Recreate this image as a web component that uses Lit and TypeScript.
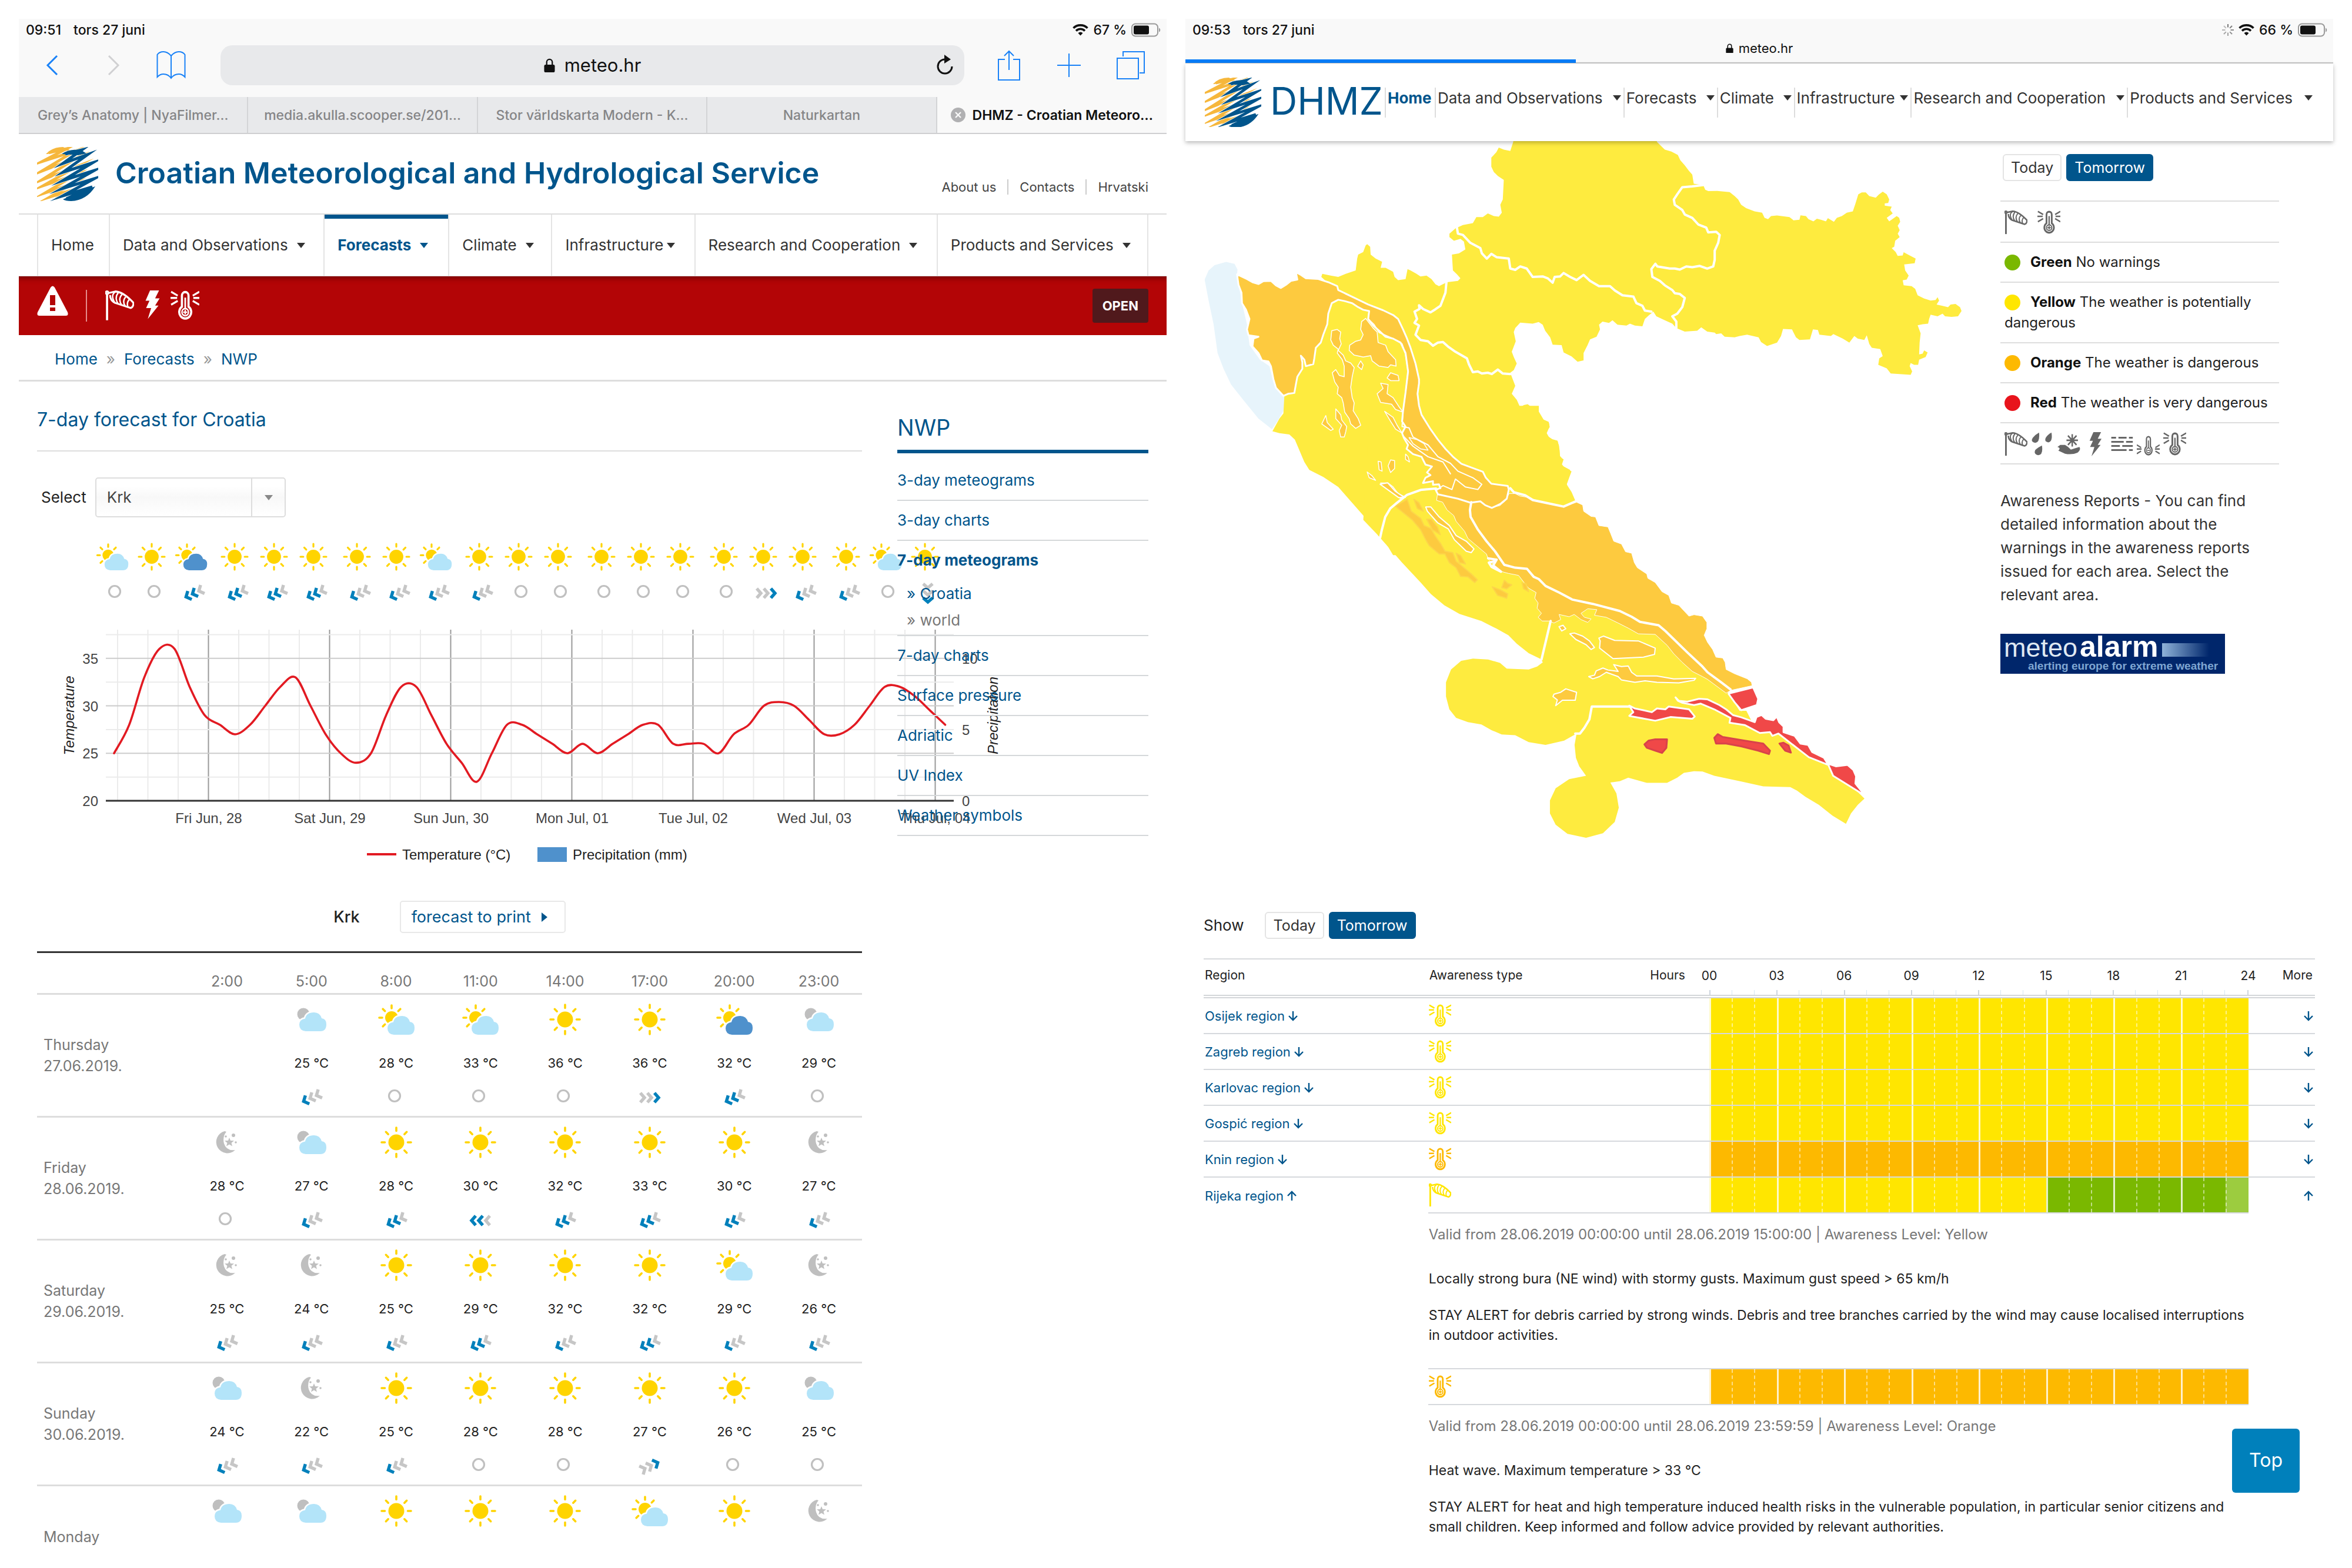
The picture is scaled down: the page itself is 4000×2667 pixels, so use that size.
import { LitElement, html, svg, css, nothing } from "lit";
import type { TemplateResult, SVGTemplateResult } from "lit";
import { classMap } from "lit/directives/class-map.js";

/* ---------- shared styles ---------- */

const base = css`
  :host {
    display: block;
    color: #222;
    font: 26px/34px Inter, "Liberation Sans", sans-serif;
  }
  * {
    box-sizing: border-box;
  }
  a {
    color: inherit;
    text-decoration: none;
  }
  button {
    font: inherit;
    color: inherit;
    border: 0;
    background: none;
    padding: 0;
    cursor: pointer;
  }
  svg {
    display: block;
  }
  ul {
    list-style: none;
    margin: 0;
    padding: 0;
  }
  h1,
  h2,
  p {
    margin: 0;
    font-weight: 400;
  }
  .status {
    display: flex;
    align-items: center;
    gap: 21px;
    height: 38px;
    padding: 0 10px 0 12px;
    font-size: 23px;
    font-weight: 500;
    line-height: 28px;
    color: #111;
  }
  .status .right {
    margin-left: auto;
    display: flex;
    align-items: center;
    gap: 8px;
  }
  .caret {
    display: inline-block;
    border: 7px solid transparent;
    border-top: 9px solid currentColor;
    border-bottom: 0;
  }
`;

/* ---------- status bar and logo ---------- */

const wifi = html`<svg width="27" height="20" viewBox="0 0 27 20" fill="none" stroke="#111" stroke-width="3.6">
  <path d="M1.5 6.8a17 17 0 0 1 24 0M6 11.4a10.6 10.6 0 0 1 15 0" />
  <path d="M13.5 19.5l-4-4.3a5.8 5.8 0 0 1 8 0z" fill="#111" stroke="none" />
</svg>`;

const battery = html`<svg width="50" height="24" viewBox="0 0 50 24">
  <rect x="1" y="1.500" width="44" height="21" rx="6" fill="none" stroke="#999" stroke-width="2" />
  <rect x="4" y="4.500" width="26" height="15" rx="3" fill="#111" />
  <path d="M47 8.500c3 1 3 6 0 7z" fill="#999" />
</svg>`;

const spinner = html`<svg width="20" height="22" viewBox="-10 -11 20 22" stroke="#777" stroke-width="2">
  ${[0, 45, 90, 135, 180, 225, 270, 315].map(
    (a, i) => svg`<path d="M0 -4.500L0 -10" transform=${`rotate(${a})`} opacity=${1 - i * 0.08} />`
  )}
</svg>`;

const lock = (size: number) => html`<svg width=${size} height=${size * 1.3} viewBox="0 0 20 26">
  <path d="M5 13V7a5 5 0 0 1 10 0v6" fill="none" stroke="#111" stroke-width="2.400" />
  <rect x="0.500" y="11.500" width="19" height="14" rx="2.500" fill="#111" />
</svg>`;

const logo = (width: number) => html`<svg
  width=${width}
  viewBox="0 0 104 92"
  fill="none"
  stroke-miterlimit="14"
  role="img"
  aria-label="DHMZ"
>
  <path
    d="M20 10L50 3 8 25 64 7 8 41 68 18 8 56 68 33 10 66 66 47 14 78 62 62 22 85 54 75 32 88"
    stroke="#f6b73c" stroke-width="4.800"
  />
  <path d="M15 12Q26 0 44 0L56 5 42 8 46 4 18 12z" fill="#f6b73c" />
  <path
    d="M48 12L76 5 44 28 86 13 44 43 94 27 44 57 97 40 42 71 97 54 44 83 94 68 50 88"
    stroke="#fff" stroke-width="6.600"
  />
  <path
    d="M48 12L76 5 44 28 86 13 44 43 94 27 44 57 97 40 42 71 97 54 44 83 94 68 50 88"
    stroke="#00558c" stroke-width="5"
  />
  <path d="M42 12Q56 2 76 6L84 11 70 14z" fill="#00558c" />
  <path d="M44 89L70 78 99 67Q84 91 58 92Q48 92 44 89z" fill="#00558c" />
</svg>`;

/* ---------- awareness icons, 48 by 48 ---------- */

const thermometer = (sign: SVGTemplateResult) => svg`
  <path d="M19 9a5.500 5.500 0 0 1 11 0v17a10 10 0 1 1-11 0z" fill="none" stroke="currentColor" stroke-width="3.600" />
  <circle cx="24.500" cy="34.500" r="5.500" fill="none" stroke="currentColor" stroke-width="2.400" />
  <path d="M24.500 12V29" stroke="currentColor" stroke-width="2.800" />
  ${sign}`;

const AWARENESS: Record<string, SVGTemplateResult> = {
  wind: svg`<g fill="none" stroke="currentColor" stroke-width="3" stroke-linejoin="round">
    <circle cx="3" cy="4.500" r="2" /><path d="M3 6V47" stroke-width="3.600" />
    <path d="M5 5L17 2.500C28 3 38 11 47 20Q47 27 42 28L16 20Q8 16 8 8" />
    <path d="M17 3Q8 8 16 20M22 4Q15 12 21 21M28 7Q21 14 27 23M34 11Q28 17 33 25M40 15Q35 20 38 27" stroke-width="2.400" /></g>`,
  heat: svg`${thermometer(svg`<path d="M21 34.500h7M24.500 31v7" stroke="currentColor" stroke-width="2.200" />`)}
    <path d="M1 3L12 9M0 12.500H11M1 23L12 17M48 3L37 9M48 12.500H38M48 23L37 17" stroke="currentColor" stroke-width="3" />`,
  cold: svg`<g transform="translate(6 7) scale(.75 .86)">${thermometer(svg`<path d="M21 34.500h7" stroke="currentColor" stroke-width="2.200" />`)}</g>
    <path d="M0 26L9 31M0 34H10M0 43L9 38M48 26L39 31M48 34H38M48 43L39 38" stroke="currentColor" stroke-width="2.600" />`,
  storm: svg`<path d="M20 1H36L29 14H37L29 26H35L16 48L22 30H13L19 18H12z" fill="currentColor" />`,
  rain: svg`<g fill="currentColor"><path d="M17 2Q19 22 9 22Q-2 20 4 12Q9 6 17 2z" /><path d="M43 2Q46 20 36 21Q27 19 31 12Q35 6 43 2z" /><path d="M23 27Q26 46 15 46Q5 44 9 36Q14 31 23 27z" /></g>`,
  snow: svg`<path d="M0 30L6 26H16Q22 29 28 35L46 30Q50 35 42 41Q30 46 16 43L2 37Q8 32 0 30z" fill="currentColor" />
    <path d="M31 5V29M19 17H43M22 8L40 26M40 8L22 26" stroke="currentColor" stroke-width="3" />
    <circle cx="31" cy="17" r="4" fill="currentColor" />`,
  fog: svg`<path d="M2 12H12M17 12H34M39 12H47M2 20H28M33 20H47M2 28H20M25 28H47M2 36H34M39 36H47" stroke="currentColor" stroke-width="3.600" />`,
};

const awareness = (kind: string, size = 40) =>
  html`<svg width=${size} height=${size * 1.1} viewBox="0 0 48 49" preserveAspectRatio="none" aria-label=${kind} role="img">
    ${AWARENESS[kind]}
  </svg>`;

/* ---------- weather and wind symbols, centred on 0,0 ---------- */

const rays = (x: number, y: number, from: number, to: number) =>
  [0, 45, 90, 135, 180, 225, 270, 315].map(
    (a) =>
      svg`<path d=${`M0 ${-from}V${-to}`} transform=${`translate(${x} ${y}) rotate(${a})`} stroke="#ffd400" stroke-width="3.600" stroke-linecap="round" />`
  );

const CLOUD = "M-14 31Q-25 30 -25 20Q-25 11 -15 9.500Q-13 -1 0 -1Q10 -1 13 9Q21 10 21 19Q21 31 11 31z";

const cloud = (x: number, y: number, fill: string) =>
  svg`<path d=${CLOUD} transform=${`translate(${x} ${y})`} fill=${fill} stroke="#fff" stroke-width="5" paint-order="stroke" />`;

const weather = (kind: string): SVGTemplateResult => {
  switch (kind) {
    case "s":
      return svg`${rays(0, 0, 19.5, 25)}<circle r="13.500" fill="#ffd400" />`;
    case "pc":
    case "pd":
      return svg`${rays(-8, -3, 16, 21)}<circle cx="-8" cy="-3" r="11" fill="#ffd400" />
        ${cloud(10, -5, kind === "pc" ? "#b3e4f9" : "#4f91cc")}`;
    case "nc":
      return svg`<circle cx="-14" cy="-9" r="10.500" fill="#bfbfbf" />${cloud(4, -11, "#b3e4f9")}`;
    case "m":
      return svg`<path d="M-4 -19A19 19 0 1 0 14 13Q-1 15 -5 2Q-8 -10 -1 -18z" fill="#bfbfbf" />
        <path d="M4 -8l2 5 6 .3-4.500 3.700 1.500 5.500-5-3-5 3 1.500-5.500-4.500-3.700 6-.3z" fill="#bfbfbf" />
        <g fill="#bfbfbf"><circle cx="-2" cy="-10" r="1.800" /><circle cx="11" cy="-12" r="3" /><circle cx="15" cy="0" r="1.800" /></g>`;
    default:
      return svg``;
  }
};

/* wind code: "c" is calm, otherwise a direction letter and the strength from 1 to 3 */
const TURN: Record<string, number> = { l: 0, w: -25, d: -90, u: 155, r: 180 };

const wind = (code: string): SVGTemplateResult => {
  if (!code) return svg``;
  if (code === "c") return svg`<circle cx="-3" cy="-3" r="9.500" fill="none" stroke="#c0c0c0" stroke-width="3.200" />`;
  const strength = Number(code[1]);
  return svg`<g transform=${`rotate(${TURN[code[0]]})`} fill="none" stroke-width="5.400">
    ${[-19, -7, 5].map(
      (t, i) => svg`<path d=${`M${t + 11} -8L${t + 4} 0L${t + 11} 8`} stroke=${i < strength ? "#0080bb" : "#c6c6c6"} />`
    )}
  </g>`;
};

/* ---------- meteogram ---------- */

const TEMPS = [
  25, 28, 33, 36, 36, 32, 29, 28, 27, 28, 30, 32, 33, 30, 27, 25, 24, 25, 29, 32, 32, 29, 26, 24, 22, 25, 28, 28, 27,
  26, 25, 26, 25, 26, 27, 28, 28, 26, 26, 26, 25, 27, 28, 30, 30.4, 30, 28.5, 27, 27, 28, 30, 32, 32, 31, 29.5, 28,
];
const tx = (i: number) => 194 + i * 25.7;
const ty = (t: number) => 1364 - (t - 20) * 16.15;

const curve = () => {
  const p = TEMPS.map((t, i) => [tx(i), ty(t)]);
  let d = `M${p[0]}`;
  for (let i = 0; i < p.length - 1; i++) {
    const a = p[Math.max(i - 1, 0)];
    const b = p[i];
    const c = p[i + 1];
    const e = p[Math.min(i + 2, p.length - 1)];
    d += `C${b[0] + (c[0] - a[0]) / 6} ${b[1] + (c[1] - a[1]) / 6} ${c[0] - (e[0] - b[0]) / 6} ${c[1] - (e[1] - b[1]) / 6} ${c[0]} ${c[1]}`;
  }
  return d;
};

const SKY = "pc s pd s s s s s pc s s s s s s s s s s pc s".split(" ");
const WINDS = "c c w2 w2 w2 w2 w1 w1 w1 w1 c c c c c c r1 w1 w1 c d1".split(" ");
const skyX = (i: number) => 191 + Math.floor(i / 3) * 208 + (i % 3) * 67;
const DAYS = ["Fri Jun, 28", "Sat Jun, 29", "Sun Jun, 30", "Mon Jul, 01", "Tue Jul, 02", "Wed Jul, 03", "Thu Jul, 04"];

/* ---------- forecast table ---------- */

const HOURS = ["2:00", "5:00", "8:00", "11:00", "14:00", "17:00", "20:00", "23:00"];
interface Day {
  name: string;
  date?: string;
  sky: string[];
  temps?: number[];
  winds?: string[];
}
const FORECAST: Day[] = [
  { name: "Thursday", date: "27.06.2019.", sky: ["", "nc", "pc", "pc", "s", "s", "pd", "nc"], temps: [NaN, 25, 28, 33, 36, 36, 32, 29], winds: ["", "w1", "c", "c", "c", "r1", "w2", "c"] },
  { name: "Friday", date: "28.06.2019.", sky: ["m", "nc", "s", "s", "s", "s", "s", "m"], temps: [28, 27, 28, 30, 32, 33, 30, 27], winds: ["c", "w1", "w2", "l2", "w2", "w2", "w2", "w1"] },
  { name: "Saturday", date: "29.06.2019.", sky: ["m", "m", "s", "s", "s", "s", "pc", "m"], temps: [25, 24, 25, 29, 32, 32, 29, 26], winds: ["w1", "w1", "w1", "w2", "w1", "w2", "w1", "w1"] },
  { name: "Sunday", date: "30.06.2019.", sky: ["nc", "m", "s", "s", "s", "s", "s", "nc"], temps: [24, 22, 25, 28, 28, 27, 26, 25], winds: ["w1", "w1", "w1", "c", "c", "u1", "c", "c"] },
  { name: "Monday", sky: ["nc", "nc", "s", "s", "s", "pc", "s", "m"] },
];

class ForecastPanel extends LitElement {
  static styles = [
    base,
    css`
      .chrome {
        background: #f9f9f9;
      }
      .toolbar {
        display: grid;
        grid-template-columns: 343px 1fr 344px;
        align-items: center;
        padding: 7px 0 20px;
        color: #1a82f7;
      }
      .group {
        display: grid;
        align-items: center;
      }
      .group.left {
        grid-template-columns: 104px 85px 1fr;
        padding-left: 45px;
      }
      .group.end {
        grid-template-columns: 101px 101px 1fr;
        padding-left: 57px;
      }
      .group button {
        justify-self: start;
      }
      .address {
        display: grid;
        grid-template-columns: 1fr auto 1fr;
        align-items: center;
        height: 68px;
        border-radius: 20px;
        background: #e8e9eb;
        color: #111;
        font-size: 31px;
      }
      .address .host {
        grid-column: 2;
        display: flex;
        align-items: center;
        gap: 16px;
      }
      .address button {
        justify-self: end;
        padding-right: 18px;
      }
      .tabs {
        display: grid;
        grid-template-columns: repeat(5, minmax(0, 1fr));
        height: 63px;
        border-bottom: 2px solid #cfcfd1;
        background: #e8e9eb;
        color: #858587;
        font-size: 23px;
        font-weight: 500;
      }
      .tabs a {
        display: flex;
        align-items: center;
        justify-content: center;
        gap: 12px;
        border-right: 2px solid #d3d4d6;
        white-space: nowrap;
      }
      .tabs a:last-child {
        border-right: 0;
      }
      .tabs .on {
        background: #f9f9f9;
        color: #111;
        font-weight: 600;
      }
      .brand {
        display: flex;
        align-items: center;
        gap: 29px;
        height: 135px;
        padding: 0 31px;
      }
      .brand h1 {
        font-size: 50px;
        line-height: 56px;
        padding-bottom: 4px;
        font-weight: 600;
        color: #00558c;
      }
      .brand ul {
        display: flex;
        margin: 44px 0 0 auto;
        font-size: 22px;
        color: #444;
      }
      .brand li + li {
        margin-left: 19px;
        padding-left: 19px;
        border-left: 2px solid #ccc;
      }
      .brand li {
        line-height: 26px;
      }
      .menu {
        display: grid;
        grid-template-columns: 122fr 365fr 212fr 175fr 243fr 412fr 360fr;
        padding: 0 31px;
        border-top: 2px solid #ddd;
        border-bottom: 1px solid #ddd;
        color: #333;
      }
      .menu a {
        display: flex;
        align-items: center;
        gap: 15px;
        height: 104px;
        padding-left: 22px;
        border-left: 2px solid #e4e4e4;
        white-space: nowrap;
      }
      .menu a:last-child {
        border-right: 2px solid #e4e4e4;
      }
      .menu a.tight {
        gap: 6px;
      }
      .menu a.on {
        color: #00558c;
        font-weight: 700;
        box-shadow: inset 0 7px #00558c;
      }
      .alert {
        display: flex;
        align-items: center;
        height: 100px;
        padding: 0 31px;
        background: #b30506;
        box-shadow: inset 0 10px 8px -6px #7d0304;
        color: #fff;
      }
      .alert .triangle {
        margin: 0 30px 18px 0;
      }
      .alert .hazards {
        display: flex;
        gap: 8px;
        padding-left: 31px;
        border-left: 2px solid #e58c8c;
      }
      .alert button {
        margin-left: auto;
        height: 58px;
        padding: 0 17px;
        border-radius: 4px;
        background: #50191c;
        font-size: 22px;
        font-weight: 700;
      }
      .crumbs {
        display: flex;
        gap: 15px;
        height: 79px;
        align-items: center;
        padding: 5px 61px 0;
        border-bottom: 3px solid #ddd;
        color: #00558c;
      }
      .crumbs span {
        color: #999;
      }
      .body {
        display: grid;
        grid-template-columns: minmax(0, 1403fr) minmax(0, 427fr);
        gap: 60px;
        align-items: start;
        padding: 0 31px;
      }
      h2.title {
        padding: 45px 0 32px;
        border-bottom: 2px solid #ddd;
        font-size: 32px;
        line-height: 40px;
        color: #00558c;
      }
      .pick {
        display: flex;
        align-items: center;
        gap: 15px;
        margin: 44px 0 30px 7px;
      }
      .select {
        display: grid;
      }
      .select > * {
        grid-area: 1 / 1;
      }
      .select .drop {
        justify-self: end;
        width: 59px;
        border-left: 2px solid #ddd;
        display: grid;
        place-items: center;
        color: #888;
        pointer-events: none;
      }
      select {
        appearance: none;
        width: 324px;
        height: 68px;
        padding: 0 18px;
        border: 2px solid #ddd;
        border-radius: 5px;
        background: linear-gradient(#fff 20%, #f8f8f8 50%, #fff);
        font: inherit;
        color: #444;
      }
      .meteogram {
        width: 100%;
        overflow: visible;
        font: 24px "Liberation Sans", Arial, sans-serif;
        fill: #444;
      }
      .place {
        display: flex;
        justify-content: center;
        align-items: center;
        gap: 68px;
        margin: 54px 0 31px;
        font-size: 27px;
        font-weight: 500;
      }
      .print {
        display: flex;
        align-items: center;
        gap: 18px;
        height: 55px;
        padding: 0 29px 0 18px;
        border: 2px solid #e8e8e8;
        border-radius: 5px;
        color: #00558c;
        font-weight: 400;
      }
      .print i {
        border: 8px solid transparent;
        border-left: 10px solid currentColor;
        border-right: 0;
      }
      table {
        width: 100%;
        table-layout: fixed;
        border-collapse: collapse;
        border-top: 3px solid #333;
      }
      col.day {
        width: 18%;
      }
      th {
        font-weight: 400;
        font-size: 25px;
        line-height: 36px;
        color: #777;
        padding: 0;
      }
      tbody th {
        padding-left: 11px;
        text-align: left;
      }
      tr {
        border-bottom: 3px solid #ddd;
      }
      thead th {
        padding: 30px 0 2px;
      }
      thead th + th {
        padding-right: 3px;
      }
      tbody tr:last-child {
        border-bottom: 0;
      }
      tbody tr:last-child th {
        height: 107px;
        vertical-align: bottom;
        padding-bottom: 2px;
      }
      td {
        padding: 14px 3px 13px 0;
        text-align: center;
        font-size: 22px;
        line-height: 28px;
        vertical-align: top;
      }
      td svg {
        margin: 0 auto;
      }
      td p {
        min-height: 28px;
        margin: 32px 0 27px;
      }
      .side {
        position: relative;
        z-index: 1;
        color: #00558c;
      }
      .side h2 {
        margin: 55px 0 13px;
        padding-bottom: 15px;
        border-bottom: 6px solid #00558c;
        font-size: 38px;
        line-height: 46px;
      }
      .side li.item {
        border-bottom: 2px solid #d5d8da;
      }
      .side li.item > a {
        display: block;
        line-height: 66px;
      }
      .side .on > a {
        font-weight: 700;
      }
      .side .sub {
        padding: 1px 0 3px 16px;
        line-height: 45px;
      }
      .side .dim {
        color: #777;
      }
    `,
  ];

  private chart(): TemplateResult {
    return html`<svg class="meteogram" viewBox="63 912 1403 568" role="img" aria-label="7-day meteogram for Krk">
      ${SKY.map((k, i) => svg`<g transform=${`translate(${skyX(i)} 949) scale(.88)`}>${weather(k)}</g>`)}
      ${WINDS.map((k, i) => svg`<g transform=${`translate(${skyX(i) + (k === "c" ? 7 : 5)} 1011)`}>${wind(k)}</g>`)}
      ${Array.from({ length: 28 }, (_, i) => {
        const x = 200 + i * 51.5;
        return i % 4 === 3
          ? svg`<path d=${`M${x} 1073V1364`} stroke="#999" stroke-width="2" />`
          : svg`<path d=${`M${x} 1073V1364`} stroke="#ebebeb" stroke-width="2" />`;
      })}
      ${[22.5, 27.5, 32.5, 37.5].map((t) => svg`<path d=${`M180 ${ty(t)}H1622`} stroke="#ebebeb" stroke-width="2" />`)}
      ${[25, 30, 35].map((t) => svg`<path d=${`M180 ${ty(t)}H1622`} stroke="#ccc" stroke-width="2" />`)}
      <path d="M180 1364H1622" stroke="#333" stroke-width="3" />
      <path d=${curve()} fill="none" stroke="#e21a22" stroke-width="3.600" stroke-linecap="round" />
      ${[20, 25, 30, 35].map((t) => svg`<text x="167" y=${ty(t) + 9} text-anchor="end">${t}</text>`)}
      ${[0, 5, 10].map((t) => svg`<text x="1636" y=${1373 - t * 24.2}>${t}</text>`)}
      ${DAYS.map((d, i) => svg`<text x=${355 + i * 206} y="1402" text-anchor="middle">${d}</text>`)}
      <g font-style="italic" text-anchor="middle" fill="#222">
        <text transform="translate(126 1219) rotate(-90)">Temperature</text>
        <text transform="translate(1697 1219) rotate(-90)">Precipitation</text>
      </g>
      <path d="M624 1455H674" stroke="#e21a22" stroke-width="4" />
      <rect x="914" y="1443" width="50" height="25" fill="#4f91cc" />
      <g fill="#222">
        <text x="684" y="1464">Temperature (°C)</text>
        <text x="974" y="1464">Precipitation (mm)</text>
      </g>
    </svg>`;
  }

  private day(d: Day): TemplateResult {
    return html`<tr>
      <th scope="row">${d.name}${d.date ? html`<br />${d.date}` : nothing}</th>
      ${HOURS.map(
        (_, i) => html`<td>
          <svg width="68" height="56" viewBox="-34 -28 68 56">${weather(d.sky[i])}</svg>
          ${d.temps && d.winds
            ? html`<p>${d.temps[i] ? `${d.temps[i]} °C` : nothing}</p>
                <svg width="48" height="36" viewBox="-24 -18 48 36">${wind(d.winds[i])}</svg>`
            : nothing}
        </td>`
      )}
    </tr>`;
  }

  render() {
    const menu: [string, string][] = [
      ["Home", ""],
      ["Data and Observations", ""],
      ["Forecasts", "on"],
      ["Climate", ""],
      ["Infrastructure", "tight"],
      ["Research and Cooperation", ""],
      ["Products and Services", ""],
    ];
    return html`
      <div class="chrome">
        <div class="status">
          <span>09:51</span><span>tors 27 juni</span>
          <span class="right">${wifi}<span>67 %</span>${battery}</span>
        </div>
        <div class="toolbar">
          <div class="group left">
            <button aria-label="Back">
              <svg width="24" height="36" viewBox="0 0 24 36" fill="none" stroke="currentColor" stroke-width="3"><path d="M20 2L4 18L20 34" /></svg>
            </button>
            <button aria-label="Forward">
              <svg width="24" height="36" viewBox="0 0 24 36" fill="none" stroke="#d0d0d2" stroke-width="3"><path d="M4 2L20 18L4 34" /></svg>
            </button>
            <button aria-label="Bookmarks">
              <svg width="50" height="48" viewBox="0 0 50 48" fill="none" stroke="currentColor" stroke-width="2">
                <path d="M25 46V8Q19 1 12 1Q5 1 1.500 6V44Q6 39 12 39Q20 39 25 46Q30 39 38 39Q44 39 48.500 44V6Q45 1 38 1Q31 1 25 8" />
              </svg>
            </button>
          </div>
          <div class="address">
            <span class="host">${lock(19)}<span>meteo.hr</span></span>
            <button aria-label="Reload">
              <svg width="30" height="36" viewBox="0 0 30 36"><path d="M17 8H14A12 12 0 1 0 27 20" fill="none" stroke="#111" stroke-width="3" /><path d="M14 0L25 8L14 15z" fill="#111" /></svg>
            </button>
          </div>
          <div class="group end">
            <button aria-label="Share">
              <svg width="38" height="52" viewBox="0 0 38 52" fill="none" stroke="currentColor" stroke-width="2"><path d="M12 16H1V51H37V16H26M19 34V2M11 10L19 2L27 10" /></svg>
            </button>
            <button aria-label="New tab">
              <svg width="40" height="40" viewBox="0 0 40 40" stroke="currentColor" stroke-width="2"><path d="M20 0V40M0 20H40" /></svg>
            </button>
            <button aria-label="Show tabs">
              <svg width="48" height="48" viewBox="0 0 48 48" fill="none" stroke="currentColor" stroke-width="2"><path d="M1 12H37V47H1zM11 9V1H47V37H39" /></svg>
            </button>
          </div>
        </div>
        <nav class="tabs">
          <a href="#">Grey’s Anatomy | NyaFilmer…</a>
          <a href="#">media.akulla.scooper.se/201…</a>
          <a href="#">Stor världskarta Modern - K…</a>
          <a href="#">Naturkartan</a>
          <a href="#" class="on">
            <svg width="25" height="25" viewBox="0 0 25 25"><circle cx="12.500" cy="12.500" r="12.500" fill="#b0b0b2" /><path d="M8 8L17 17M17 8L8 17" stroke="#f9f9f9" stroke-width="2.400" /></svg>
            DHMZ - Croatian Meteoro…
          </a>
        </nav>
      </div>

      <header class="brand">
        ${logo(104)}
        <h1>Croatian Meteorological and Hydrological Service</h1>
        <ul>
          <li><a href="#">About us</a></li>
          <li><a href="#">Contacts</a></li>
          <li><a href="#">Hrvatski</a></li>
        </ul>
      </header>

      <nav class="menu">
        ${menu.map(
          ([t, c]) => html`<a href="#" class=${classMap({ on: c === "on", tight: c === "tight" })}
            >${t}${t === "Home" ? nothing : html`<i class="caret"></i>`}</a
          >`
        )}
      </nav>

      <div class="alert">
        <svg class="triangle" width="53" height="51" viewBox="0 0 53 51">
          <path d="M23 3Q26.500-2 30 3L52 45Q54 51 49 51H4Q-1 51 1 45z" fill="#fff" />
          <path d="M22 16H31V33H22zM22 37H31V43H22z" fill="#b30506" />
        </svg>
        <div class="hazards">${awareness("wind", 49)} ${awareness("storm", 46)} ${awareness("heat", 49)}</div>
        <button>OPEN</button>
      </div>

      <nav class="crumbs">
        <a href="#">Home</a><span>»</span><a href="#">Forecasts</a><span>»</span><a href="#">NWP</a>
      </nav>

      <div class="body">
        <main>
          <h2 class="title">7-day forecast for Croatia</h2>
          <div class="pick">
            <label for="place">Select</label>
            <div class="select">
              <select id="place">
                <option>Krk</option>
              </select>
              <span class="drop"><i class="caret"></i></span>
            </div>
          </div>
          ${this.chart()}
          <div class="place">
            <span>Krk</span>
            <a class="print" href="#">forecast to print<i></i></a>
          </div>
          <table>
            <colgroup>
              <col class="day" />
              <col span="8" />
            </colgroup>
            <thead>
              <tr>
                <th></th>
                ${HOURS.map((h) => html`<th scope="col">${h}</th>`)}
              </tr>
            </thead>
            <tbody>
              ${FORECAST.map((d) => this.day(d))}
            </tbody>
          </table>
        </main>
        <aside class="side">
          <h2>NWP</h2>
          <ul>
            <li class="item"><a href="#">3-day meteograms</a></li>
            <li class="item"><a href="#">3-day charts</a></li>
            <li class="item on">
              <a href="#">7-day meteograms</a>
              <ul class="sub">
                <li><a href="#">» Croatia</a></li>
                <li><a class="dim" href="#">» world</a></li>
              </ul>
            </li>
            ${["7-day charts", "Surface pressure", "Adriatic", "UV Index", "Weather symbols"].map(
              (t) => html`<li class="item"><a href="#">${t}</a></li>`
            )}
          </ul>
        </aside>
      </div>
    `;
  }
}
customElements.define("forecast-panel", ForecastPanel);

/* ---------- warnings map ---------- */

/* The mainland is digitised on a northern and a southern sheet, each with its own grid. */
const NORTH = "translate(2030 230) scale(.848 .4464)";
const SOUTH = "translate(2330 700) scale(.574 .4847)";

const poly = (points: string) => `M${points}Z`;

const N_YELLOW =
  "641,10 929,10 929,25 945,55 958,62 971,75 976,95 985,115 993,135 1000,150 1003,185 1022,190 1026,208 1032,213 1050,212 1075,217 1085,232 1092,245 1098,265 1108,278 1125,290 1140,295 1145,315 1152,320 1158,308 1170,306 1195,312 1203,324 1215,322 1217,305 1228,308 1233,320 1243,328 1250,318 1258,322 1268,328 1272,316 1284,330 1290,315 1300,308 1310,295 1322,290 1327,262 1333,225 1340,218 1348,218 1355,232 1368,238 1374,226 1382,215 1390,225 1395,245 1393,258 1386,260 1386,268 1400,272 1397,285 1402,298 1390,315 1395,328 1410,308 1415,315 1417,330 1412,345 1416,362 1412,375 1416,388 1407,402 1405,425 1400,430 1408,445 1412,460 1422,458 1424,446 1436,458 1448,470 1446,488 1425,492 1427,515 1434,535 1430,550 1422,553 1424,572 1440,575 1447,585 1452,610 1465,622 1478,630 1488,628 1492,617 1495,630 1490,645 1502,650 1513,655 1518,645 1528,643 1537,655 1540,670 1533,690 1520,692 1507,690 1502,680 1492,690 1478,684 1475,700 1473,718 1462,720 1452,724 1458,755 1456,790 1455,835 1462,832 1465,820 1472,828 1468,845 1455,855 1453,875 1445,875 1438,868 1436,880 1441,900 1438,913 1398,908 1390,888 1373,875 1375,850 1382,842 1377,815 1360,810 1355,795 1350,762 1345,780 1332,775 1325,765 1315,790 1302,775 1283,758 1278,765 1255,760 1252,742 1242,740 1236,778 1215,780 1208,770 1200,740 1182,738 1178,765 1170,790 1150,803 1138,788 1133,770 1110,760 1095,765 1085,770 1065,768 1058,755 1048,758 1045,752 1030,748 1018,732 1010,745 985,748 968,735 960,718 945,705 928,690 922,672 912,688 905,700 900,728 885,725 875,718 868,725 850,722 840,705 833,715 820,710 813,722 815,740 808,768 795,778 790,800 782,830 782,858 770,863 758,843 742,828 738,800 720,798 715,770 705,745 700,722 692,712 680,718 655,714 645,735 642,750 646,785 638,825 642,845 648,870 642,895 635,905 640,930 645,955 638,985 648,1008 655,1038 662,1028 670,1025 680,1040 690,1055 700,1082 712,1092 714,1110 708,1135 715,1158 730,1165 734,1200 735,1228 742,1235 738,1258 755,1275 752,1300 748,1330 758,1360 766,1395 742,1413 632,1600 400,1600 390,1568 370,1525 350,1470 290,1340 260,1302 232,1275 222,1245 212,1200 203,1160 192,1140 172,1135 158,1128 172,1080 180,1060 182,990 250,640 290,600 256,540 258,528 275,535 290,540 305,528 325,515 328,470 330,455 340,445 345,420 348,415 354,425 355,455 365,470 378,482 375,505 385,505 400,520 403,540 410,552 425,548 429,510 435,515 447,528 455,538 467,535 477,548 485,568 492,575 508,560 530,555 535,545 528,530 520,515 518,455 532,450 545,435 542,405 535,395 522,402 513,388 513,375 525,355 540,342 560,335 567,312 580,312 590,298 602,308 612,310 618,295 615,265 620,245 622,170 610,155 602,140 597,120 597,85 607,65 612,47 622,55 635,60 641,25";
const N_ORANGE =
  "87,530 107,548 118,560 130,567 140,556 155,555 165,572 175,582 185,570 195,555 208,550 205,522 215,532 225,545 250,548 270,560 288,575 290,590 325,622 350,645 380,667 400,685 410,700 420,740 428,775 435,810 445,870 452,930 452,945 449,985 452,1030 457,1065 475,1120 490,1160 505,1195 520,1225 537,1252 560,1268 580,1282 586,1305 597,1328 630,1336 632,1350 628,1385 615,1405 598,1420 585,1410 575,1395 555,1400 530,1385 490,1368 485,1350 495,1345 492,1330 480,1332 480,1318 460,1325 465,1305 475,1295 468,1285 478,1262 465,1255 457,1225 440,1215 427,1195 430,1180 422,1155 418,1135 425,1110 418,1090 420,1050 425,980 430,900 425,830 415,790 400,775 385,768 372,745 360,725 350,700 352,670 340,665 330,655 318,640 303,632 290,627 277,640 270,680 268,720 260,760 255,790 245,810 242,850 240,872 225,880 222,855 215,840 218,865 218,890 208,920 205,950 202,982 190,985 180,993 165,962 160,930 155,880 150,862 137,858 130,830 118,805 120,775 130,768 110,762 107,740 112,700 105,665 97,640 96,600 90,570";
const N_SEA =
  "87,530 97,640 107,720 112,800 133,855 152,880 160,940 180,990 184,1000 180,1050 168,1090 157,1120 130,1080 100,1010 75,950 60,890 48,830 40,720 30,630 22,550 30,515 42,495 65,483 82,490 88,512";
const N_LINES = [
  "1022,190 1000,195 980,198 970,225 963,245 965,265 980,285 985,302 1000,315 1012,340 1028,352 1032,370 1048,368 1055,380 1052,410 1045,440 1045,475 1042,500 1030,508 1015,498 1000,503 988,500 975,512 965,508 955,508 930,500 926,490 918,510 920,540 935,555 945,572 960,590 965,602 975,605 985,620 980,655 970,680 960,690 968,710 968,735",
  "528,352 530,375 540,380 555,410 575,430 578,450 588,470 597,452 608,465 632,470 635,508 645,513 655,500 668,508 680,540 700,538 710,545 720,562 724,540 735,538 742,525 755,540 768,552 782,532 795,555 813,575 835,575 845,592 860,610 882,615 888,640 900,650 905,668 918,672",
  "507,560 505,600 495,650 485,663 475,675 460,662 452,648 453,662 443,672 448,700 443,715 452,725 445,760 455,780 470,785 480,802 490,790 500,788 510,805 525,825 548,850 552,872 560,903 570,900 578,908 590,905 598,910 610,893 620,908 635,910",
  "635,1345 642,1360 665,1372 680,1390 705,1400 742,1415 766,1395",
];
const N_ISLANDS = [
  "345,698 352,715 360,735 368,750 370,790 385,800 390,825 405,855 406,880 395,875 390,885 372,880 358,860 355,840 340,845 322,838 312,820 313,800 325,785 335,780 340,760 335,740 337,710",
  "277,745 288,740 295,750 293,775 296,795 290,820 300,838 305,860 315,868 322,885 318,920 315,960 318,1000 322,1020 320,1050 330,1080 335,1105 325,1117 315,1100 312,1080 303,1055 300,1020 297,1000 288,985 290,960 283,940 278,905 285,893 292,915 302,920 302,880 298,855 288,830 290,815 280,800 275,780",
  "285,1043 295,1065 297,1085 307,1110 305,1130 302,1150 295,1150 292,1125 297,1105 285,1080",
  "335,860 340,875 337,893 329,880",
  "395,905 410,915 412,935 395,935 388,925",
  "375,945 390,950 388,985 400,1000 412,1035 420,1055 405,1045 397,1025 375,1018 368,985 380,965",
  "383,1052 400,1075 408,1105 418,1135 405,1120 395,1090",
  "432,1152 448,1160 462,1175 470,1200 455,1195 440,1175",
  "265,1068 268,1095 280,1120 275,1125 257,1100",
  "370,1242 376,1245 378,1280 372,1275",
  "395,1237 403,1240 403,1270 395,1285 390,1260",
  "425,1215 430,1225 433,1245 425,1235",
  "348,1283 358,1298 365,1315 352,1305",
  "375,1325 390,1325 400,1340 410,1365 425,1380 415,1385 395,1355",
];
const N_STRAITS = ["352,670 350,700 362,722 372,752 400,775 418,795 425,835 430,900 425,980 420,1050 418,1110 432,1115 440,1150 470,1180 490,1225 515,1250 530,1280 560,1305 578,1330 570,1350 545,1340 525,1310 518,1350 500,1335 488,1352", "420,1145 440,1185 470,1225 500,1245 515,1290"];

const S_YELLOW =
  "-20,380 30,442 95,530 150,600 180,640 220,680 265,710 330,735 375,762 410,785 435,815 470,848 505,868 512,880 495,895 470,905 405,902 385,882 350,870 305,867 270,875 240,905 225,950 225,1000 235,1045 255,1075 290,1090 330,1098 360,1118 390,1133 430,1136 470,1160 520,1170 575,1155 612,1130 606,1170 610,1215 620,1245 640,1278 590,1290 550,1322 533,1365 533,1410 550,1450 585,1482 640,1496 690,1480 725,1440 737,1390 730,1340 712,1302 740,1297 765,1285 820,1303 880,1303 910,1285 930,1268 960,1262 985,1263 1020,1278 1100,1298 1165,1315 1210,1317 1245,1318 1265,1330 1290,1352 1330,1380 1370,1418 1410,1447 1425,1410 1445,1380 1465,1358 1362,1240 1300,1215 1215,1130 1130,1085 1115,1050 1095,1050 1060,985 900,740 607,312 590,285 583,255 590,232 597,210 575,195 565,180 572,168 562,155 560,120 555,102 540,97 525,85 522,70 532,55 530,40 515,30 500,0 500,-20 0,-20";
const S_ORANGE =
  "200,292 240,298 290,316 322,312 345,330 360,337 385,330 402,312 412,288 430,288 445,297 475,302 495,315 540,325 570,332 595,325 612,318 630,328 633,350 655,368 668,370 678,400 705,405 713,428 722,455 745,465 757,492 775,497 783,530 792,548 820,570 823,585 845,600 865,632 885,645 893,672 915,680 945,718 960,713 985,718 998,740 998,762 990,785 1000,810 1015,835 1025,862 1045,865 1052,880 1055,905 1080,920 1118,938 1130,950 1132,962 1070,978 1055,988 1040,975 1000,940 985,930 955,912 925,880 900,850 880,820 845,782 795,780 765,760 735,742 700,722 665,715 672,695 645,692 625,708 635,722 655,728 645,740 625,730 605,712 590,720 560,712 565,730 545,742 530,735 510,735 498,722 508,708 495,690 498,672 488,655 492,635 470,620 455,598 440,575 410,568 385,560 350,518 345,500 310,465 290,445 280,420 255,385 248,365 228,345 215,318 198,312";
const S_RED = [
  "1062,990 1135,968 1150,1008 1146,1030 1100,1048 1080,1020",
  "905,1003 915,1015 940,1018 975,1008 1000,1010 1035,1030 1055,1045 1075,1065 1100,1073 1140,1090 1145,1072 1160,1065 1172,1078 1195,1083 1205,1070 1212,1090 1225,1105 1225,1125 1258,1138 1275,1165 1298,1170 1310,1195 1345,1215 1355,1235 1380,1245 1415,1240 1432,1258 1440,1280 1438,1305 1467,1348 1440,1328 1372,1278 1358,1240 1300,1213 1210,1130 1192,1138 1185,1125 1155,1128 1110,1100 1065,1092 1068,1075 1020,1045 980,1025 960,1030 925,1022 912,1015",
  "768,1032 785,1042 810,1048 835,1055 850,1042 875,1045 885,1035 945,1045 962,1070 955,1078 890,1072 845,1085 768,1068 780,1055",
];
const S_PLAIN_RED = [
  "1020,1145 1030,1132 1045,1142 1110,1155 1165,1165 1185,1190 1182,1202 1150,1190 1100,1175 1055,1165 1025,1165",
  "813,1168 825,1155 845,1150 880,1150 878,1180 865,1198 845,1190 820,1180",
  "1213,1165 1225,1162 1240,1172 1247,1197 1230,1190",
];
const S_ISLANDS = [
  "592,780 605,777 630,788 650,805 665,828 655,835 640,818 610,800",
  "678,795 692,788 725,803 795,805 845,830 843,852 810,862 720,867 680,830 682,805",
  "648,930 665,925 670,910 690,900 705,907 735,912 722,888 745,895 765,893 775,915 790,928 850,928 900,938 965,936 960,943 915,952 850,950 815,945 785,950 745,942 735,930 700,915 680,930 660,938",
  "545,992 565,985 580,973 612,985 608,1013 570,1013 550,1032 555,1012 542,1000",
  "165,335 180,335 205,370 235,400 255,435 285,455 308,482 300,495 285,490 250,450 232,412 200,390 170,350",
  "560,755 572,750 580,762 568,770",
  "30,255 52,250 75,280 100,300 85,302",
];
const S_PLAIN_ISLANDS = [
  "75,332 110,308 122,350 150,375 160,400 180,410 195,440 210,465 222,490 245,495 255,525 275,545 300,570 318,590 310,600 290,580 268,578 255,548 235,530 222,500 205,500 175,470 165,450 150,415 125,380",
  "130,308 145,320 158,350 140,340",
  "168,378 182,378 200,405 208,432 185,415",
  "255,497 268,505 283,535 265,530",
  "362,615 385,625 408,640 405,655 378,645",
  "398,592 408,603 420,608 405,622 390,618",
  "450,600 462,605 470,632 455,622",
];
const S_LINES = [
  "30,442 35,415 45,370 60,340 80,320 110,292 150,275 195,270",
  "300,318 296,345 298,370 320,415 345,455 370,490 398,538 430,548 465,552 485,580 500,588 520,612 560,635 600,660 660,675 740,700 775,720 800,738 855,750 875,770 940,845 985,895 1000,915 1040,950 1068,975",
  "535,735 508,870",
  "768,1035 657,1035 650,1080 635,1110 622,1130 608,1130",
  "350,515 375,520 365,540 388,562 360,545 352,530 372,525",
];

const shapes = (list: string[], fill: string, stroke = "none") =>
  list.map((p) => svg`<path d=${poly(p)} fill=${fill} stroke=${stroke} />`);
const lines = (list: string[], width: number) =>
  list.map((p) => svg`<path d=${`M${p}`} fill="none" stroke="#fff" stroke-width=${width} />`);

/* ---------- awareness table ---------- */

const repeat = (level: string, n: number) => Array.from({ length: n }, () => level);
const YELLOW = repeat("yellow", 24);
const ORANGE = repeat("orange", 24);
const MIXED = [...repeat("yellow", 15), ...repeat("green", 8), "pale"];

class WarningsPanel extends LitElement {
  static styles = [
    base,
    css`
      :host {
        position: relative;
      }
      .chrome {
        position: relative;
        height: 76px;
        background: #f9f9f9;
        border-bottom: 2px solid #c6c6c6;
      }
      .host {
        display: flex;
        justify-content: center;
        align-items: center;
        gap: 9px;
        font-size: 22px;
        line-height: 24px;
        color: #111;
      }
      .progress {
        position: absolute;
        left: 0;
        bottom: -1px;
        width: 34%;
        height: 6px;
        background: #087cf7;
      }
      header {
        position: relative;
        z-index: 1;
        display: flex;
        align-items: center;
        height: 132px;
        padding: 0 31px 0 33px;
        background: #fff;
        box-shadow: 0 3px 7px #0004;
      }
      .word {
        width: 210px;
        padding: 0 0 4px 15px;
        font-size: 64px;
        line-height: 72px;
        color: #00558c;
      }
      .menu {
        flex: 1;
        display: grid;
        grid-template-columns: 85fr 321fr 159fr 131fr 199fr 368fr 320fr;
        color: #333;
      }
      .menu a {
        display: flex;
        align-items: center;
        justify-content: space-between;
        padding: 1px 4px 16px 3px;
        border-left: 2px solid #ddd;
        white-space: nowrap;
      }
      .menu a.on {
        color: #00558c;
        font-weight: 700;
      }
      .top {
        display: grid;
        grid-template-columns: minmax(0, 1353fr) minmax(0, 474fr);
        align-items: start;
        padding: 0 92px 0 33px;
      }
      .map {
        width: 100%;
        stroke-linejoin: round;
        stroke-linecap: round;
      }
      .map path {
        vector-effect: non-scaling-stroke;
      }
      .days {
        display: flex;
        gap: 8px;
        font-size: 25px;
      }
      .days button {
        height: 46px;
        padding: 0 12px;
        border: 2px solid #e4e4e4;
        border-radius: 6px;
        color: #333;
      }
      .days button.on {
        background: #00558c;
        border-color: #00558c;
        color: #fff;
      }
      .legend .days {
        margin: 22px 0 33px 4px;
      }
      .levels {
        border-top: 2px solid #ddd;
        font-size: 24px;
        line-height: 35px;
      }
      .levels li {
        padding: 15px 0 16px 7px;
        border-bottom: 2px solid #ddd;
      }
      .levels b {
        color: #111;
      }
      .levels .icons {
        display: flex;
        gap: 17px;
        padding: 14px 0 11px 7px;
        color: #666;
      }
      .levels .icons.all {
        gap: 6px;
      }
      .dot {
        display: inline-block;
        width: 27px;
        height: 27px;
        margin-right: 17px;
        border-radius: 50%;
        vertical-align: -6px;
      }
      .about {
        margin: 42px 0 46px;
        line-height: 40px;
        color: #333;
      }
      .dot.green,
      .bar .green {
        background: #7ab800;
      }
      .dot.yellow,
      .bar .yellow {
        background: #ffe600;
      }
      .dot.orange,
      .bar .orange {
        background: #fdb900;
      }
      .dot.red {
        background: #e8141c;
      }
      .bar .pale {
        background: #9ccc3f;
      }
      .show {
        display: flex;
        align-items: center;
        gap: 36px;
        margin: 91px 0 33px 31px;
      }
      .reports {
        margin: 0 31px;
      }
      table {
        width: 100%;
        table-layout: fixed;
        border-spacing: 0;
        border-top: 2px solid #d8dadd;
      }
      .c1 {
        width: 20.2%;
      }
      .c2 {
        width: 18%;
      }
      .c3 {
        width: 7.3%;
      }
      .c4 {
        width: 48.5%;
      }
      th,
      td {
        padding: 0;
        text-align: left;
        font-weight: 400;
      }
      thead th {
        height: 66px;
        padding: 0 0 6px 2px;
        font-size: 21px;
        border-bottom: 6px double #d3d6d9;
        color: #222;
      }
      th.hours {
        text-align: right;
        padding-right: 41px;
      }
      th.scale {
        vertical-align: bottom;
        padding: 0;
      }
      th.end {
        text-align: right;
        padding-right: 4px;
      }
      .marks {
        display: flex;
        justify-content: space-between;
        margin: 0 -15px 7px;
      }
      .marks span {
        width: 30px;
        text-align: center;
      }
      .ticks {
        display: grid;
        grid-template-columns: repeat(24, 1fr);
        height: 8px;
        border-right: 2px solid #cdd5de;
      }
      .ticks i {
        border-left: 1px solid #d5e6f4;
      }
      .ticks i:nth-child(3n + 1) {
        border-left: 2px solid #cdd5de;
      }
      tbody .line {
        height: 61px;
        border-bottom: 2px solid #d6d9dd;
      }
      tbody .region {
        height: 61px;
        padding-left: 2px;
        font-size: 22px;
        color: #00558c;
      }
      .region a {
        display: flex;
        align-items: center;
        gap: 6px;
      }
      .type {
        padding-left: 1px;
        vertical-align: middle;
      }
      .again .line {
        border-top: 2px solid #d6d9dd;
        height: 63px;
      }
      .yellowed {
        color: #ffe600;
      }
      .oranged {
        color: #fdb900;
      }
      .bar {
        display: grid;
        grid-template-columns: repeat(24, 1fr);
        height: 59px;
      }
      .bar i {
        border-left: 2px dashed #ffffff88;
      }
      .bar i:nth-child(3n + 1) {
        border-left: 3px solid #fffc;
      }
      .more {
        color: #00558c;
      }
      .more svg {
        margin: 0 3px 0 auto;
      }
      .detail {
        font-size: 23px;
        padding: 19px 0 39px 1px;
      }
      .detail .valid {
        font-size: 24px;
        color: #777;
      }
      .detail p + p {
        margin-top: 41px;
      }
      .detail p + p + p {
        margin-top: 28px;
      }
      .detail.last {
        padding-bottom: 0;
      }
      .to-top {
        position: absolute;
        right: 57px;
        bottom: 95px;
        display: grid;
        place-items: center;
        width: 115px;
        height: 109px;
        border-radius: 6px;
        background: #0080bb;
        color: #fff;
        font-size: 32px;
      }
    `,
  ];

  private arrow(up: boolean) {
    return html`<svg width="16" height="18" viewBox="0 0 16 18" fill="none" stroke="currentColor" stroke-width="2.400">
      <path d=${up ? "M8 17V2M1 9L8 2L15 9" : "M8 1V16M1 9L8 16L15 9"} />
    </svg>`;
  }

  private days() {
    return html`<div class="days"><button>Today</button><button class="on">Tomorrow</button></div>`;
  }

  private map() {
    return html`<svg class="map" viewBox="2049 240 1353 1220" role="img" aria-label="Awareness map of Croatia">
      <g transform=${NORTH}>${shapes([N_SEA], "#e7f4fb")}${shapes([N_YELLOW], "#feeb3f")}</g>
      <g transform=${SOUTH}>
        ${shapes([S_YELLOW], "#feeb3f")} ${shapes([S_ORANGE], "#fdca3f", "#fff")}
      </g>
      <g transform=${NORTH} stroke-width="3">${shapes([N_ORANGE], "#fdca3f", "#fff")}</g>
      <g transform=${NORTH} stroke-width="1.500">
        ${shapes(N_ISLANDS, "#fdca3f", "#fff")} ${lines(N_STRAITS, 2)} ${lines(N_LINES, 4)}
      </g>
      <g transform=${SOUTH} stroke-width="2">
        ${shapes(S_ISLANDS, "#fdca3f", "#fff")} ${shapes(S_PLAIN_ISLANDS, "#fdca3f", "#fcd64a")}
        ${lines(S_LINES, 4)}
      </g>
      <g transform=${SOUTH} stroke-width="3">
        ${shapes(S_RED, "#f04848", "#fff")} ${shapes(S_PLAIN_RED, "#f04848", "#d8434a")}
      </g>
    </svg>`;
  }

  private bar(levels: string[]) {
    return html`<div class="bar">${levels.map((l) => html`<i class=${l}></i>`)}</div>`;
  }

  private row(name: string, kind: string, levels: string[], open = false) {
    const tint = { yellowed: levels[0] === "yellow", oranged: levels[0] === "orange" };
    return html`<tr>
      <th scope="row" class=${classMap({ region: true, line: !open })}>
        <a href="#">${name} region ${this.arrow(open)}</a>
      </th>
      <td colspan="2" class=${classMap({ type: true, line: true, ...tint })}>${awareness(kind, 38)}</td>
      <td class="line">${this.bar(levels)}</td>
      <td class=${classMap({ more: true, line: !open })}>${this.arrow(open)}</td>
    </tr>`;
  }

  render() {
    const menu = ["Home", "Data and Observations", "Forecasts", "Climate", "Infrastructure", "Research and Cooperation", "Products and Services"];
    return html`
      <div class="chrome">
        <div class="status">
          <span>09:53</span><span>tors 27 juni</span>
          <span class="right">${spinner}${wifi}<span>66 %</span>${battery}</span>
        </div>
        <div class="host">${lock(13)}<span>meteo.hr</span></div>
        <div class="progress"></div>
      </div>
      <header>
        ${logo(96)}
        <span class="word">DHMZ</span>
        <nav class="menu">
          ${menu.map(
            (t, i) => html`<a href="#" class=${classMap({ on: i === 0 })}>${t}${i ? html`<i class="caret"></i>` : nothing}</a>`
          )}
        </nav>
      </header>
      <section class="top">
        ${this.map()}
        <aside class="legend">
          ${this.days()}
          <ul class="levels">
            <li class="icons">${awareness("wind", 39)}${awareness("heat", 39)}</li>
            <li><span class="dot green"></span><b>Green</b> No warnings</li>
            <li><span class="dot yellow"></span><b>Yellow</b> The weather is potentially dangerous</li>
            <li><span class="dot orange"></span><b>Orange</b> The weather is dangerous</li>
            <li><span class="dot red"></span><b>Red</b> The weather is very dangerous</li>
            <li class="icons all">
              ${["wind", "rain", "snow", "storm", "fog", "cold", "heat"].map((k) => awareness(k, 39))}
            </li>
          </ul>
          <p class="about">
            Awareness Reports - You can find detailed information about the warnings in the awareness reports issued for
            each area. Select the relevant area.
          </p>
          <a href="#">
            <svg width="382" height="68" viewBox="0 0 382 68" font-family="Liberation Sans, Arial, sans-serif">
              <defs>
                <linearGradient id="fade"><stop stop-color="#8fb3d9" /><stop offset="1" stop-color="#00266b" /></linearGradient>
              </defs>
              <rect width="382" height="68" fill="#00266b" />
              <rect x="275" y="16" width="80" height="23" fill="url(#fade)" />
              <text x="6" y="39" font-size="45" fill="#dfe8f2">meteo</text>
              <text x="135" y="39" font-size="50" font-weight="700" fill="#fff">alarm</text>
              <text x="47" y="61" font-size="19" font-weight="700" fill="#7fa6d2">alerting europe for extreme weather</text>
            </svg>
          </a>
        </aside>
      </section>
      <div class="show"><span>Show</span>${this.days()}</div>
      <div class="reports">
        <table>
          <colgroup>
            <col class="c1" />
            <col class="c2" />
            <col class="c3" />
            <col class="c4" />
            <col />
          </colgroup>
          <thead>
            <tr>
              <th scope="col">Region</th>
              <th scope="col">Awareness type</th>
              <th scope="col" class="hours">Hours</th>
              <th scope="col" class="scale">
                <div class="marks">
                  ${["00", "03", "06", "09", "12", "15", "18", "21", "24"].map((h) => html`<span>${h}</span>`)}
                </div>
                <div class="ticks">${YELLOW.map(() => html`<i></i>`)}</div>
              </th>
              <th scope="col" class="end">More</th>
            </tr>
          </thead>
          <tbody>
            ${this.row("Osijek", "heat", YELLOW)} ${this.row("Zagreb", "heat", YELLOW)}
            ${this.row("Karlovac", "heat", YELLOW)} ${this.row("Gospić", "heat", YELLOW)}
            ${this.row("Knin", "heat", ORANGE)} ${this.row("Rijeka", "wind", MIXED, true)}
            <tr>
              <td></td>
              <td class="detail" colspan="3">
                <p class="valid">Valid from 28.06.2019 00:00:00 until 28.06.2019 15:00:00 | Awareness Level: Yellow</p>
                <p>Locally strong bura (NE wind) with stormy gusts. Maximum gust speed > 65 km/h</p>
                <p>
                  STAY ALERT for debris carried by strong winds. Debris and tree branches carried by the wind may cause
                  localised interruptions in outdoor activities.
                </p>
              </td>
              <td></td>
            </tr>
            <tr class="again">
              <td></td>
              <td colspan="2" class="type line oranged">${awareness("heat", 38)}</td>
              <td class="line">${this.bar(ORANGE)}</td>
              <td></td>
            </tr>
            <tr>
              <td></td>
              <td class="detail last" colspan="3">
                <p class="valid">Valid from 28.06.2019 00:00:00 until 28.06.2019 23:59:59 | Awareness Level: Orange</p>
                <p>Heat wave. Maximum temperature > 33 °C</p>
                <p>
                  STAY ALERT for heat and high temperature induced health risks in the vulnerable population, in
                  particular senior citizens and small children. Keep informed and follow advice provided by relevant
                  authorities.
                </p>
              </td>
              <td></td>
            </tr>
          </tbody>
        </table>
      </div>
      <button class="to-top">Top</button>
    `;
  }
}
customElements.define("warnings-panel", WarningsPanel);

class AppRoot extends LitElement {
  static styles = css`
    :host {
      display: grid;
      grid-template-columns: repeat(2, minmax(0, 1fr));
      gap: 32px;
      padding: 32px;
      background: #fff;
    }
  `;

  render() {
    return html`<forecast-panel></forecast-panel><warnings-panel></warnings-panel>`;
  }
}
customElements.define("app-root", AppRoot);
